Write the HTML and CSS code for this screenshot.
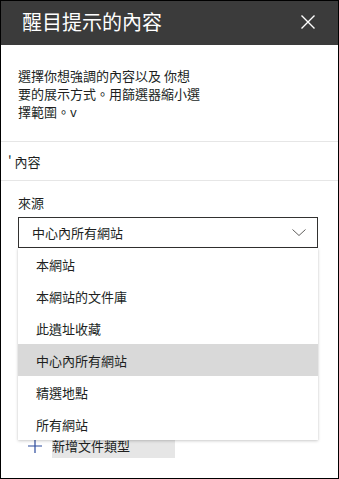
FILE: index.html
```html
<!DOCTYPE html>
<html lang="zh-Hant">
<head>
<meta charset="utf-8">
<link rel="stylesheet" href="styles.css">
</head>
<body>
<div class="panel">
  <header class="panel-header">
    <h1 class="panel-title">醒目提示的內容</h1>
    <button class="close-btn" aria-label="關閉">
      <svg width="14" height="14" viewBox="0 0 14 14"><path d="M0.5 0.5 L13.5 13.5 M13.5 0.5 L0.5 13.5" stroke="#fff" stroke-width="1.4" fill="none"/></svg>
    </button>
  </header>
  <p class="desc">選擇你想強調的內容以及 你想<br>要的展示方式。用篩選器縮小選<br>擇範圍。v</p>
  <div class="section-row">' 內容</div>
  <div class="field">
    <label class="field-label">來源</label>
    <div class="dropdown">
      <span class="dropdown-value">中心內所有網站</span>
      <svg class="chevron" width="14" height="7" viewBox="0 0 14 7"><path d="M0.5 0.5 L7 6.5 L13.5 0.5" stroke="#605e5c" stroke-width="1" fill="none"/></svg>
      <ul class="menu">
        <li class="menu-item">本網站</li>
        <li class="menu-item">本網站的文件庫</li>
        <li class="menu-item">此遺址收藏</li>
        <li class="menu-item selected">中心內所有網站</li>
        <li class="menu-item">精選地點</li>
        <li class="menu-item">所有網站</li>
      </ul>
    </div>
  </div>
  <div class="add-row">
    <svg class="plus" width="14" height="14" viewBox="0 0 14 14"><path d="M7 0 V14 M0 7 H14" stroke="#2b4a9c" stroke-width="1.2" fill="none"/></svg>
    <span class="add-label">新增文件類型</span>
  </div>
</div>
</body>
</html>
```

FILE: styles.css
```css
html, body {
  margin: 0;
  padding: 0;
  background: #fff;
}

.panel {
  width: 339px;
  height: 479px;
  box-sizing: border-box;
  border: 1px solid #000;
  background: #fff;
  overflow: hidden;
  font-family: "Noto Sans CJK TC", "Noto Sans", sans-serif;
  color: #201f1e;
}

.panel-header {
  height: 44px;
  box-sizing: border-box;
  background: #3b3b3b;
  display: flex;
  align-items: center;
  justify-content: space-between;
  padding: 0 23px 3px 21px;
}

.panel-title {
  margin: 0;
  font-size: 20px;
  font-weight: normal;
  line-height: 24px;
  color: #fff;
}

.close-btn {
  border: 0;
  background: transparent;
  padding: 0;
  width: 14px;
  height: 14px;
  display: flex;
}

.desc {
  margin: 22px 0 0;
  padding: 0 17px;
  font-size: 13px;
  line-height: 18px;
}

.section-row {
  margin-top: 20px;
  border-top: 1px solid #e6e6e6;
  border-bottom: 1px solid #e6e6e6;
  height: 38px;
  display: flex;
  align-items: center;
  padding-left: 7px;
  font-size: 13px;
}

.field {
  padding: 13px 20px 0 17px;
}

.field-label {
  display: block;
  font-size: 13px;
  line-height: 18px;
  margin-bottom: 5px;
}

.dropdown {
  position: relative;
  height: 31px;
  box-sizing: border-box;
  border: 1px solid #323130;
  display: flex;
  align-items: center;
  justify-content: space-between;
  padding: 0 11px 0 13px;
  font-size: 13px;
}

.chevron {
  display: block;
}

.menu {
  position: absolute;
  left: -1px;
  right: -1px;
  top: 30px;
  margin: 0;
  padding: 0;
  list-style: none;
  background: #fff;
  box-shadow: 0 1px 3px rgba(0, 0, 0, 0.2), 0 0 1px rgba(0, 0, 0, 0.1);
  z-index: 2;
}

.menu-item {
  height: 32px;
  display: flex;
  align-items: center;
  padding-left: 18px;
  font-size: 13px;
}

.menu-item.selected {
  background: #d9d9d9;
}

.add-row {
  margin-top: 186px;
  padding-left: 27px;
  display: flex;
  align-items: center;
  gap: 10px;
}

.plus {
  display: block;
}

.add-label {
  width: 123px;
  height: 24px;
  background: #e6e6e6;
  font-size: 13px;
  display: flex;
  align-items: flex-end;
  padding-bottom: 3px;
  box-sizing: border-box;
}
```
